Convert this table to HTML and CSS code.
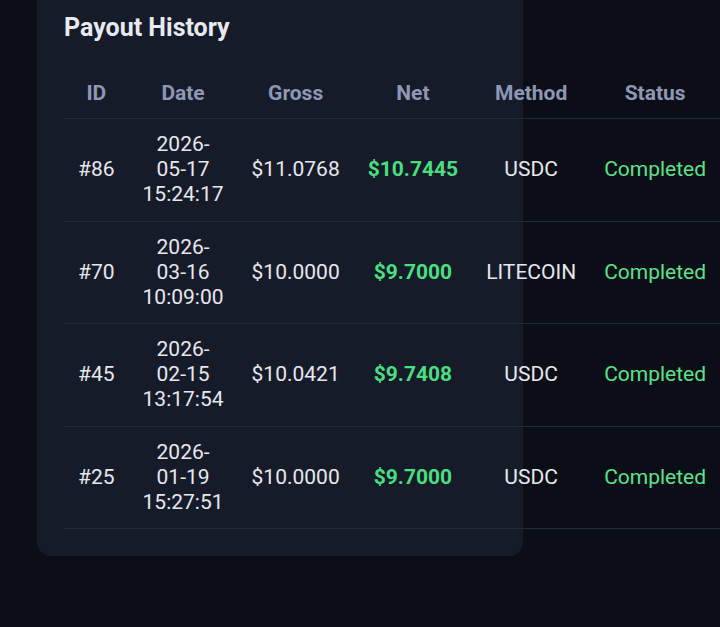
FILE: index.html
```html
<!DOCTYPE html>
<html lang="en">
  <head>
    <meta charset="UTF-8" />
    <meta name="viewport" content="width=device-width, initial-scale=1.0" />
    <title>Payout History</title>
    <link rel="stylesheet" href="styles.css">
  </head>
  <body>
    <main class="page">
      <section class="card">
        <h2 class="card-title">Payout History</h2>
        <table class="payouts">
          <thead>
            <tr>
              <th>ID</th>
              <th>Date</th>
              <th>Gross</th>
              <th>Net</th>
              <th>Method</th>
              <th>Status</th>
            </tr>
          </thead>
          <tbody>
            <tr>
              <td>#86</td>
              <td>2026-05-17 15:24:17</td>
              <td>$11.0768</td>
              <td class="net">$10.7445</td>
              <td>USDC</td>
              <td class="status">Completed</td>
            </tr>
            <tr>
              <td>#70</td>
              <td>2026-03-16 10:09:00</td>
              <td>$10.0000</td>
              <td class="net">$9.7000</td>
              <td>LITECOIN</td>
              <td class="status">Completed</td>
            </tr>
            <tr>
              <td>#45</td>
              <td>2026-02-15 13:17:54</td>
              <td>$10.0421</td>
              <td class="net">$9.7408</td>
              <td>USDC</td>
              <td class="status">Completed</td>
            </tr>
            <tr>
              <td>#25</td>
              <td>2026-01-19 15:27:51</td>
              <td>$10.0000</td>
              <td class="net">$9.7000</td>
              <td>USDC</td>
              <td class="status">Completed</td>
            </tr>
          </tbody>
        </table>
      </section>
    </main>
  </body>
</html>
```

FILE: styles.css
```css
html {
  font-family: Roboto, "Noto Sans", sans-serif;
}

body {
  margin: 0;
  background-color: #0b0e17;
  color: #e6e8ee;
}

.page {
  padding: 0 37px;
  margin-top: -13px;
}

.card {
  width: 432px;
  background-color: #161b29;
  border-radius: 14px;
  padding: 25px 27px 27px;
}

.card-title {
  margin: 0 0 25px;
  font-size: 25px;
  line-height: 32px;
  font-weight: 700;
  color: #e8eaf1;
}

.payouts {
  width: 100%;
  border-collapse: collapse;
  font-size: 21px;
  line-height: 25px;
}

.payouts th {
  color: #8e97b3;
  font-weight: 700;
  padding: 12px 14px;
  border-bottom: 1px solid #232a3a;
}

.payouts td {
  text-align: center;
  padding: 13.25px 14px;
  border-bottom: 1px solid #232a3a;
}

.payouts .net {
  color: #4ade80;
  font-weight: 700;
}

.payouts .status {
  color: #5ee08a;
}
```
